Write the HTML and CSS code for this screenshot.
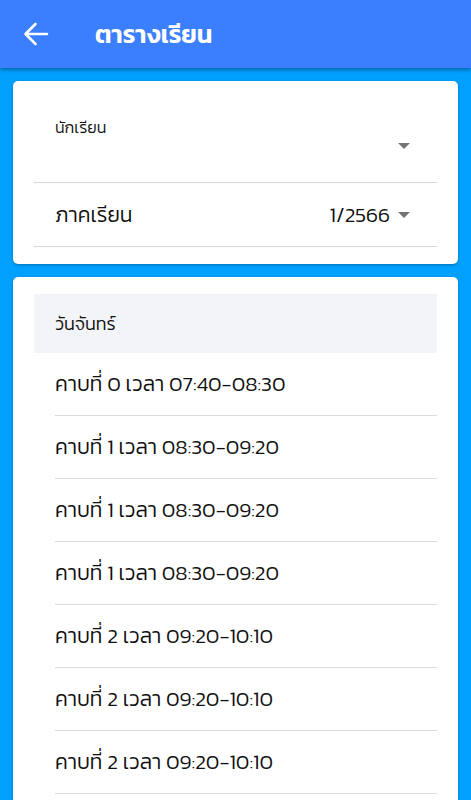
FILE: index.html
```html
<!DOCTYPE html>
<html lang="th">
<head>
    <meta charset="UTF-8">
    <meta name="viewport" content="width=device-width, initial-scale=1.0">
    <title>ตารางเรียน</title>
    <link rel="stylesheet" href="styles.css">
</head>
<body>
    <div class="topbar">
        <a class="back" href="javascript:;">
            <svg width="26" height="26" viewBox="0 0 26 26">
                <path d="M2.5 13H24M12.5 3L2.5 13l10 10" fill="none" stroke="#fff" stroke-width="2.6" stroke-linecap="round" stroke-linejoin="round"/>
            </svg>
        </a>
        <div class="title">ตารางเรียน</div>
    </div>

    <div class="content">
        <!-- เลือกนักเรียน / ภาคเรียน -->
        <div class="card filters">
            <div class="field student">
                <div class="label">นักเรียน</div>
                <div class="select">
                    <span class="value"></span>
                    <span class="caret"></span>
                </div>
            </div>
            <div class="field term">
                <span class="name">ภาคเรียน</span>
                <span class="value">1/2566</span>
                <span class="caret"></span>
            </div>
        </div>

        <!-- รายการคาบเรียน -->
        <div class="card schedule">
            <div class="day">วันจันทร์</div>
            <ul class="periods">
                <li>คาบที่ 0 เวลา 07:40-08:30</li>
                <li>คาบที่ 1 เวลา 08:30-09:20</li>
                <li>คาบที่ 1 เวลา 08:30-09:20</li>
                <li>คาบที่ 1 เวลา 08:30-09:20</li>
                <li>คาบที่ 2 เวลา 09:20-10:10</li>
                <li>คาบที่ 2 เวลา 09:20-10:10</li>
                <li>คาบที่ 2 เวลา 09:20-10:10</li>
            </ul>
        </div>
    </div>
</body>
</html>
```

FILE: styles.css
```css
*{
    margin: 0;
    padding: 0;
    box-sizing: border-box;
}

body{
    background-color: #00a0ff;
    font-family: "Kanit", "Prompt", "Noto Sans Thai", "Noto Sans", sans-serif;
    font-weight: 300;
    color: #111;
    height: 800px;
    overflow: hidden;
}

/* แถบหัวด้านบน */
.topbar{
    height: 68px;
    background-color: #3b7efe;
    display: flex;
    align-items: center;
    padding-left: 23px;
    box-shadow: 0 2px 4px rgba(0, 0, 0, 0.35);
    position: relative;
}

.back{
    display: flex;
    width: 26px;
    height: 26px;
}

.title{
    margin-left: 46px;
    color: #fff;
    font-size: 25px;
    font-weight: 600;
    line-height: 30px;
}

.content{
    padding: 13px;
    display: flex;
    flex-direction: column;
    gap: 13px;
}

.card{
    background-color: #fff;
    border-radius: 5px;
    box-shadow: 0 1px 3px rgba(0, 0, 0, 0.3);
    padding: 0 21px;
}

/* การ์ดตัวเลือก */
.filters{
    padding-bottom: 17px;
}

.field{
    border-bottom: 1px solid #d6d6d6;
}

.student{
    height: 102px;
    padding: 34px 27px 0 21px;
}

.student .label{
    font-size: 16px;
    line-height: 24px;
}

.select{
    display: flex;
    justify-content: flex-end;
    align-items: center;
    height: 14px;
}

.caret{
    width: 0;
    height: 0;
    border-left: 6px solid transparent;
    border-right: 6px solid transparent;
    border-top: 6px solid #757575;
}

.term{
    height: 64px;
    display: flex;
    align-items: center;
    padding: 0 27px 0 21px;
    font-size: 21px;
}

.term .name{
    flex: 1;
}

.term .value{
    margin-right: 8px;
}

/* การ์ดตารางเรียน
   รายการยาวต่อเลยขอบจอ */
.schedule{
    padding-top: 17px;
    padding-bottom: 40px;
}

.day{
    background-color: #f3f4f7;
    height: 59px;
    display: flex;
    align-items: center;
    padding-left: 21px;
    font-size: 18px;
}

.periods{
    list-style: none;
    margin-left: 21px;
}

.periods li{
    height: 63px;
    line-height: 62px;
    border-bottom: 1px solid #dcdcdc;
    font-size: 21px;
}
```
